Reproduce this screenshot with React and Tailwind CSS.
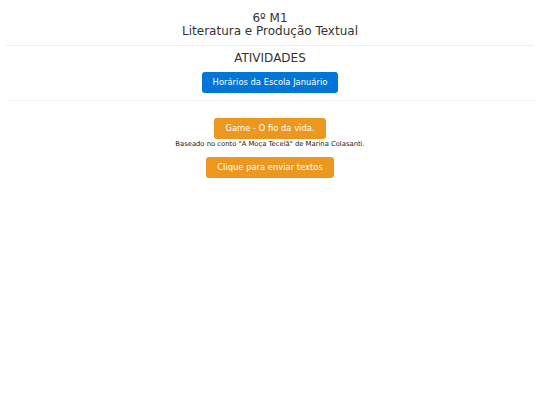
export default function App() {
  return (
    <div className="min-h-[405px] bg-white text-[#333] font-['DejaVu_Sans',sans-serif] px-[6px] pt-[12px]">
      <header className="text-center text-[12px] leading-[13px]">
        <h1>6º M1</h1>
        <h2>Literatura e Produção Textual</h2>
      </header>
      <hr className="mt-[7px] border-t border-[#eee]" />
      <section className="flex flex-col items-center pt-[5px]">
        <h3 className="text-[12px] leading-[14px]">ATIVIDADES</h3>
        <a className="mt-[7px] h-[21px] px-[11px] flex items-center rounded-[3px] bg-[#0275d8] text-white text-[8.4px]">
          Horários da Escola Januário
        </a>
      </section>
      <hr className="mt-[7px] border-t border-[#f3f3f3]" />
      <section className="flex flex-col items-center pt-[17px]">
        <a className="h-[21px] px-[11px] flex items-center rounded-[3px] bg-[#ec971f] text-white text-[8.4px]">
          Game - O fio da vida.
        </a>
        <p className="mt-[1px] text-[6.8px] leading-[9px] text-[#222]">
          Baseado no conto "A Moça Tecelã" de Marina Colasanti.
        </p>
        <a className="mt-[8px] h-[21px] px-[11px] flex items-center rounded-[3px] bg-[#ec971f] text-white text-[8.4px]">
          Clique para enviar textos
        </a>
      </section>
    </div>
  );
}
